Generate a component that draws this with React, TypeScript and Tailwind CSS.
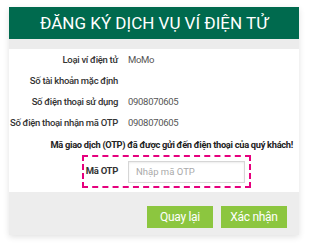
import React from 'react'

const rows = [
  { label: 'Loại ví điện tử', value: 'MoMo' },
  { label: 'Số tài khoản mặc định', value: '' },
  { label: 'Số điện thoại sử dụng', value: '0908070605' },
  { label: 'Số điện thoại nhận mã OTP', value: '0908070605' },
]

export default function App() {
  return (
    <div className="w-[308px] h-[247px] bg-white pt-[7px] pl-[9px] font-['Roboto',sans-serif]">
      <div className="w-[290px] shadow-[0_2px_6px_rgba(0,0,0,0.12)]">
        <div className="h-[32px] bg-[#006a4e] flex items-center justify-center text-white text-[17px] leading-none">
          ĐĂNG KÝ DỊCH VỤ VÍ ĐIỆN TỬ
        </div>
        <div className="h-[10px] bg-[#ececec]" />

        <div className="bg-white pt-[1px] pb-[4px]">
          {rows.map((r) => (
            <div key={r.label} className="h-[21px] flex items-center text-[9.5px] tracking-[-0.3px] whitespace-nowrap">
              <span className="w-[109px] shrink-0 flex justify-end font-medium text-[#333]">{r.label}</span>
              <span className="pl-[10px] text-[#555]">{r.value}</span>
            </div>
          ))}
          <div className="h-[21px] flex items-center justify-end pr-[6px] text-[9.3px] tracking-[-0.3px] font-bold text-[#222] whitespace-nowrap">
            Mã giao dịch (OTP) đã được gửi đến điện thoại của quý khách!
          </div>

          {/* OTP input */}
          <div className="ml-[73px] w-[169px] h-[33px] border-2 border-dashed border-[#e6007e] flex items-center">
            <span className="w-[34px] shrink-0 flex justify-end whitespace-nowrap text-[9.5px] font-bold text-[#333] tracking-[-0.3px]">
              Mã OTP
            </span>
            <input
              className="ml-[10px] w-[117px] h-[22px] border border-[#d6d6d6] shadow-[inset_0_1px_2px_rgba(0,0,0,0.08)] px-[7px] text-[9.5px] outline-none placeholder:text-[#aaa]"
              placeholder="Nhập mã OTP"
            />
          </div>
        </div>

        <div className="h-[43px] bg-[#ededed] flex justify-end items-start gap-[8px] pt-[14px] pr-[12px]">
          <button className="w-[66px] h-[22px] bg-[#8cc63f] text-white text-[12px] tracking-[-0.3px]">Quay lại</button>
          <button className="w-[66px] h-[22px] bg-[#8cc63f] text-white text-[12px] tracking-[-0.3px]">Xác nhận</button>
        </div>
      </div>
    </div>
  )
}
